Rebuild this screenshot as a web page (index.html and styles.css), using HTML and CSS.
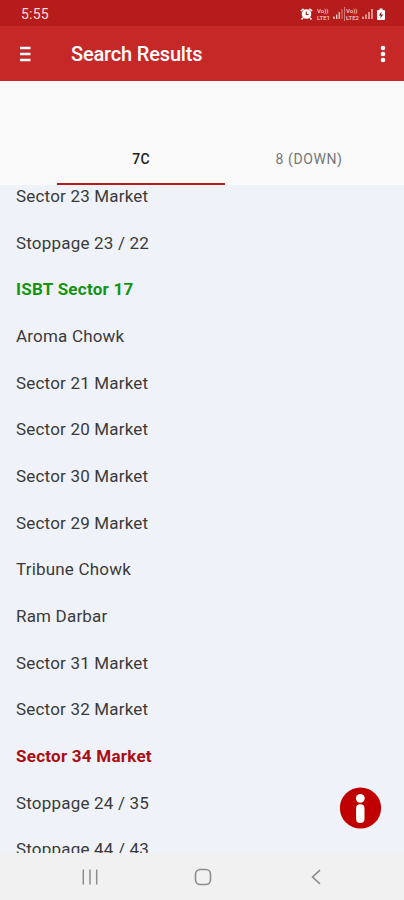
FILE: index.html
```html
<!DOCTYPE html>
<html lang="en">
<head>
<meta charset="utf-8">
<title>Search Results</title>
<link rel="stylesheet" href="styles.css">
</head>
<body>
<div class="screen">
  <div class="status">
    <span class="clock">5:55</span>
    <div class="indicators">
      <svg class="alarm" width="13" height="12" viewBox="0 0 13 12"><path d="M.8 3 3.6.8M12.2 3 9.4.8M3 9.8 1.5 11.5M10 9.8l1.5 1.7" stroke="#fff" stroke-width="1.5"/><circle cx="6.5" cy="6" r="4.8" fill="#fff"/><path d="M6.3 3.5v3h2.4" fill="none" stroke="#b71c1c" stroke-width="1.1"/></svg>
      <span class="volte"><span>Vo))</span><span>LTE1</span></span>
      <svg class="signal" width="10" height="11" viewBox="0 0 10 11"><path d="M1 11V8.5M3.7 11V6.5M6.3 11V4" stroke="#f6c9c4" stroke-width="1.4"/><path d="M9 11V1" stroke="#dc7770" stroke-width="1.2"/></svg>
      <span class="volte second"><span>Vo))</span><span>LTE2</span></span>
      <svg class="signal" width="11" height="11" viewBox="0 0 11 11"><path d="M1 11V8.5M4 11V6.5M7 11V4M10 11V1" stroke="#f0b5af" stroke-width="1.5"/></svg>
      <svg class="battery" width="8" height="12" viewBox="0 0 8 12"><path d="M2.5.5h3V2H7q1 0 1 1v8q0 1-1 1H1q-1 0-1-1V3q0-1 1-1h1.5z" fill="#fff"/><path d="M4.6 3.6 1.8 7.4h2l-.4 3 2.8-4h-2z" fill="#782020"/></svg>
    </div>
  </div>
  <header class="appbar">
    <svg class="menu" width="12" height="16" viewBox="0 0 12 16"><path d="M0 2h10.5M0 8h10.5M0 14h10.5" stroke="#fff" stroke-width="2.5"/></svg>
    <h1>Search Results</h1>
    <svg class="more" width="6" height="18" viewBox="0 0 6 18"><g fill="#fff"><circle cx="3" cy="3" r="2.3"/><circle cx="3" cy="9" r="2.3"/><circle cx="3" cy="15" r="2.3"/></g></svg>
  </header>
  <nav class="tabs">
    <div class="tab active">7C</div>
    <div class="tab">8 (DOWN)</div>
  </nav>
  <main class="results">
    <ul>
      <li>Sector 23 Market</li>
      <li>Stoppage 23 / 22</li>
      <li class="start">ISBT Sector 17</li>
      <li>Aroma Chowk</li>
      <li>Sector 21 Market</li>
      <li>Sector 20 Market</li>
      <li>Sector 30 Market</li>
      <li>Sector 29 Market</li>
      <li>Tribune Chowk</li>
      <li>Ram Darbar</li>
      <li>Sector 31 Market</li>
      <li>Sector 32 Market</li>
      <li class="end">Sector 34 Market</li>
      <li>Stoppage 24 / 35</li>
      <li>Stoppage 44 / 43</li>
    </ul>
    <svg class="info" width="42" height="42" viewBox="0 0 42 42"><circle cx="20.5" cy="21" r="20.6" fill="#c00000"/><circle cx="20.3" cy="11.3" r="4.4" fill="#fff"/><rect x="16.1" y="17.2" width="8.4" height="18.8" rx="4.1" fill="#fff"/></svg>
  </main>
  <footer class="navbar">
    <svg width="18" height="16" viewBox="0 0 18 16"><path d="M2.3 .5v15M9 .5v15M15.7 .5v15" stroke="#8c8c8c" stroke-width="1.5"/></svg>
    <svg width="18" height="18" viewBox="0 0 18 18"><rect x="1.5" y="1.5" width="15" height="15" rx="4.7" fill="none" stroke="#8c8c8c" stroke-width="1.6"/></svg>
    <svg width="18" height="16" viewBox="0 0 18 16"><path d="M13 1.2 5.5 8 13 14.8" fill="none" stroke="#8c8c8c" stroke-width="1.6"/></svg>
  </footer>
</div>
</body>
</html>
```
FILE: styles.css
```css
* { box-sizing: border-box; }
body { margin: 0; font-family: Roboto, sans-serif; }
.screen { width: 404px; height: 900px; display: flex; flex-direction: column; overflow: hidden; background: #fafafa; }
.status { flex: none; height: 26px; padding: 1px 19px 0 21px; display: flex; align-items: center; justify-content: space-between; background: #b71c1c; }
.clock { font-size: 14px; line-height: 26px; letter-spacing: .2px; color: #fbdcd8; }
.indicators { display: flex; align-items: center; }
.alarm { margin-right: 4px; }
.volte { width: 15px; display: flex; flex-direction: column; font-size: 6px; line-height: 7px; font-weight: 500; color: #f8d0cc; }
.volte.second { width: 17px; margin-left: 1px; padding-left: 1px; border-left: 1px solid #dc7770; }
.signal { margin-left: 1px; }
.battery { margin-left: 4px; }
.appbar { flex: none; height: 55px; padding: 0 18px 0 20px; display: flex; align-items: center; background: #c62828; }
.appbar h1 { flex: 1; margin: 0 0 0 39px; font-size: 20px; line-height: 24px; font-weight: 500; letter-spacing: -.17px; color: #fff; }
.tabs { flex: none; height: 104px; padding: 55px 11px 0 57px; display: flex; background: #fafafa; }
.tab { width: 168px; height: 49px; padding-top: 13px; text-align: center; font-size: 14px; line-height: 20px; letter-spacing: .6px; color: #757575; }
.tab.active { color: #212121; font-weight: 500; letter-spacing: .2px; border-bottom: 2px solid #b71c1c; }
.results { flex: none; position: relative; height: 668px; overflow: hidden; background: #eff3f9; }
.results ul { list-style: none; margin: -12.2px 0 0; padding: 0 16px; }
.results li { height: 46.7px; line-height: 46.7px; font-size: 17px; letter-spacing: .19px; color: #3a3a3a; }
.results .start { color: #149414; font-weight: 700; letter-spacing: .25px; }
.results .end { color: #ab0d12; font-weight: 700; letter-spacing: .25px; }
.info { position: absolute; right: 22px; bottom: 24px; }
.navbar { flex: none; height: 47px; padding: 0 79px 0 81px; display: flex; align-items: center; justify-content: space-between; background: #f1f1f1; }
```
